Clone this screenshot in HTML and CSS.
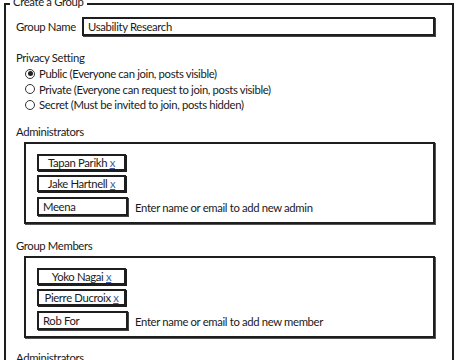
FILE: index.html
```html
<!DOCTYPE html>
<html lang="en">
<head>
<meta charset="UTF-8">
<title>Create a Group</title>
<link rel="stylesheet" href="styles.css">
</head>
<body>

<fieldset class="group-form">
<legend>Create a Group</legend>

<div class="name-row">
<label>Group Name</label>
<div class="text-box wide">Usability Research</div>
</div>

<div class="section-label privacy-label">Privacy Setting</div>
<div class="radios">
<div class="radio-row"><span class="radio on"></span>Public (Everyone can join, posts visible)</div>
<div class="radio-row"><span class="radio"></span>Private (Everyone can request to join, posts visible)</div>
<div class="radio-row"><span class="radio"></span>Secret (Must be invited to join, posts hidden)</div>
</div>

<div class="section-label admin-label">Administrators</div>
<div class="people-box">
<div class="tag">Tapan Parikh <a href="#">x</a></div>
<div class="tag">Jake Hartnell <a href="#">x</a></div>
<div class="add-row">
<div class="text-box small">Meena</div>
<span class="hint">Enter name or email to add new admin</span>
</div>
</div>

<div class="section-label members-label">Group Members</div>
<div class="people-box">
<div class="tag">Yoko Nagai <a href="#">x</a></div>
<div class="tag">Pierre Ducroix <a href="#">x</a></div>
<div class="add-row">
<div class="text-box small">Rob For</div>
<span class="hint">Enter name or email to add new member</span>
</div>
</div>

<div class="section-label last-label">Administrators</div>
</fieldset>

</body>
</html>
```

FILE: styles.css
```css
/* ---------- GLOBAL ---------- */
*{margin:0;padding:0;box-sizing:border-box;}
body{font-family:'Lato','Liberation Sans',sans-serif;font-size:11.3px;letter-spacing:-0.35px;color:#1a1a1a;background:#fff;overflow:hidden;}

/* ---------- FIELDSET ---------- */
.group-form{
margin:-5px 6px 0 4px;
border:2px solid #1e1e1e;
padding:4px 17px 0 8px;
}
.group-form legend{
margin-left:-4px;
padding:0 4px 4px 3px;
line-height:14px;
}

/* ---------- NAME ---------- */
.name-row{display:flex;align-items:center;}
.name-row label{width:68px;padding-left:2px;}
.text-box{
border:2px solid #1e1e1e;
height:19px;
line-height:15px;
padding-left:4px;
box-shadow:1px 1px 0 #444;
}
.text-box.wide{flex:1;}
.text-box.small{width:91px;}

/* ---------- PRIVACY ---------- */
.section-label{padding-left:2px;line-height:14px;}
.privacy-label{margin-top:15px;}
.radios{padding-left:11px;margin-top:1px;}
.radio-row{display:flex;align-items:center;height:15.5px;}
.radio{
width:10px;height:10px;
border:1px solid #333;
border-radius:50%;
margin-right:4px;
display:flex;align-items:center;justify-content:center;
}
.radio.on::after{content:"";width:5px;height:5px;border-radius:50%;background:#222;}

/* ---------- PEOPLE BOXES ---------- */
.admin-label{margin-top:12px;}
.members-label{margin-top:15px;}
.last-label{margin-top:13px;}
.people-box{
margin:3px 0 0 10px;
border:2px solid #1e1e1e;
padding:10px 0 6px 11px;
display:flex;flex-direction:column;gap:4px;
box-shadow:1px 1px 0 #555;
}
.tag{
width:89px;height:17px;
border:2px solid #1e1e1e;
box-shadow:1px 1px 0 #1e1e1e;
text-align:center;
line-height:13px;
}
.tag a{color:#3b5fa6;}
.add-row{display:flex;align-items:center;gap:7px;margin-top:1px;}
.hint{padding-top:2px;}
```
